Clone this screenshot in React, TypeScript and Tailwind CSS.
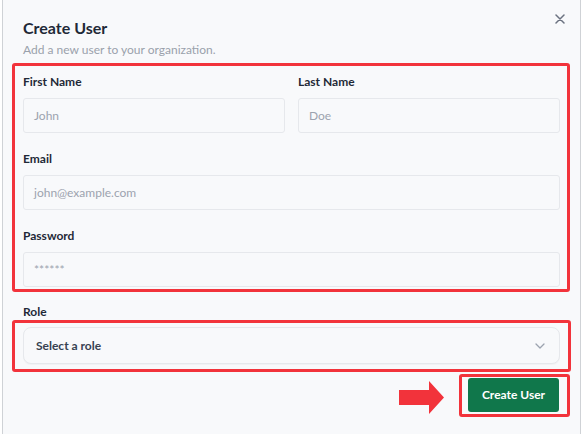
import React from "react";

function Field({ label, placeholder, mt }: { label: string; placeholder: string; mt?: string }) {
  return (
    <div className={mt ?? ""}>
      <div className="text-[12px] leading-[16px] font-bold text-[#1f2937]">{label}</div>
      <div className="mt-[8px] h-[35px] rounded-[3px] border border-[#e6e8ec] bg-[#f8f9fb] px-[10px] flex items-center text-[12px] text-[#9ca3af]">
        {placeholder}
      </div>
    </div>
  );
}

export default function App() {
  return (
    <div className="w-[584px] h-[434px] bg-white overflow-hidden" style={{ fontFamily: "Lato, 'Noto Sans', sans-serif" }}>
      <div className="ml-[2px] w-[579px] h-[434px] border-x border-[#cfd2d6] bg-[#f8f9fb] px-[9px] relative">
        <button className="absolute right-[15px] top-[14px] text-[#6b7280]">
          <svg width="10" height="10" viewBox="0 0 10 10" fill="none" stroke="currentColor" strokeWidth="1.5" strokeLinecap="round">
            <path d="M1 1L9 9M9 1L1 9" />
          </svg>
        </button>
        <div className="pl-[11px] pt-[18px]">
          <div className="text-[16px] leading-[20px] font-bold text-[#1f2937]">Create User</div>
          <div className="mt-[4px] text-[12px] leading-[16px] text-[#9aa1ab]">Add a new user to your organization.</div>
        </div>
        <div className="mt-[5px] w-[558px] border-[3px] border-[#f2333b] rounded-[3px] pt-[8px] pb-[2px] pl-[8px] pr-[7px]">
          <div className="grid grid-cols-2 gap-[13px]">
            <Field label="First Name" placeholder="John" />
            <Field label="Last Name" placeholder="Doe" />
          </div>
          <Field label="Email" placeholder="john@example.com" mt="mt-[18px]" />
          <Field label="Password" placeholder="******" mt="mt-[18px]" />
        </div>
        <div className="pl-[11px] mt-[12px] text-[12px] leading-[16px] font-bold text-[#1f2937]">Role</div>
        <div className="mt-[0px] w-[559px] border-[3px] border-[#f2333b] rounded-[3px] pt-[4px] pb-[5px] pl-[8px] pr-[8px]">
          <div className="h-[37px] rounded-[8px] border border-[#e6e8ec] bg-[#f8f9fb] shadow-[0_1px_1px_rgba(0,0,0,0.03)] flex items-center justify-between pl-[12px] pr-[14px]">
            <span className="text-[12px] font-bold text-[#374151]">Select a role</span>
            <svg width="10" height="6" viewBox="0 0 10 6" fill="none" stroke="#9ca3af" strokeWidth="1.3" strokeLinecap="round" strokeLinejoin="round">
              <path d="M1 1L5 5L9 1" />
            </svg>
          </div>
        </div>
        <div className="mt-[2px] flex items-center justify-end pr-[1px]">
          <svg width="46" height="33" viewBox="0 0 46 33" className="mr-[14px] mt-[3px]">
            <path d="M0 9H30V0L45 16.5L30 33V24H0Z" fill="#f2333b" />
          </svg>
          <div className="w-[111px] h-[43px] border-[3px] border-[#f2333b] rounded-[3px] pl-[6px] pr-[8px] pt-[1px] pb-[2px]">
            <button className="w-full h-full rounded-[3px] bg-[#10774b] text-white text-[12px] font-bold">
              Create User
            </button>
          </div>
        </div>
      </div>
    </div>
  );
}
